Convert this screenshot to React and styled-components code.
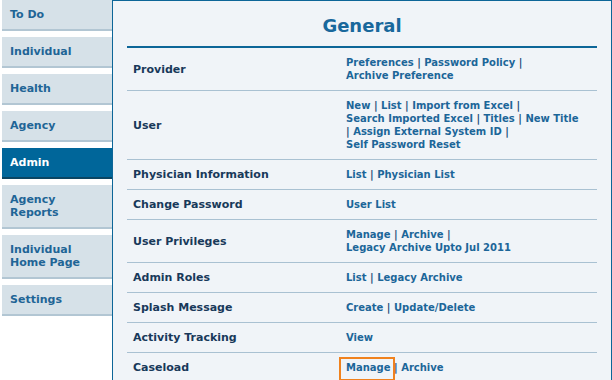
import React from 'react';
import styled, { createGlobalStyle } from 'styled-components';

const GlobalStyle = createGlobalStyle`
  html, body {
    margin: 0;
    padding: 0;
    background: #ffffff;
  }
  body {
    font-family: "DejaVu Sans", Verdana, sans-serif;
  }
`;

const Page = styled.div`
  display: flex;
  align-items: flex-start;
  width: 612px;
  height: 380px;
  overflow: hidden;
  padding-left: 2px;
  box-sizing: border-box;
`;

const Sidebar = styled.nav`
  display: flex;
  flex-direction: column;
  gap: 6px;
  width: 110px;
  flex-shrink: 0;
`;

const Tab = styled.div`
  padding: 8px 8px;
  font-size: 11px;
  line-height: 13px;
  font-weight: bold;
  color: ${p => (p.active ? '#ffffff' : '#1f6596')};
  background: ${p => (p.active ? '#00669a' : '#d6e1e8')};
  border-bottom: 2px solid ${p => (p.active ? '#0a4563' : '#b2c6d3')};
`;

const Panel = styled.section`
  width: 500px;
  height: 400px;
  box-sizing: border-box;
  background: #f0f4f8;
  border: 1px solid #0d6698;
  padding: 0 14px;
`;

const Header = styled.h1`
  margin: 0;
  padding: 14px 0 9px;
  font-size: 18px;
  line-height: 22px;
  font-weight: bold;
  text-align: center;
  color: #19689c;
  border-bottom: 2px solid #0d6698;
`;

const Row = styled.div`
  display: grid;
  grid-template-columns: 213px 1fr;
  align-items: center;
  border-bottom: 1px solid #a9c1d2;
`;

const Label = styled.div`
  padding: 8px 6px;
  font-size: 11px;
  line-height: 13px;
  font-weight: bold;
  color: #18395a;
`;

const Links = styled.div`
  padding: 8px 6px;
  font-size: 10px;
  line-height: 13px;
  font-weight: bold;
  color: #1c6699;
`;

const Line = styled.div`
  white-space: nowrap;
`;

const Link = styled.a`
  position: relative;
  color: #1c6699;
  text-decoration: none;
  cursor: pointer;

  ${p =>
    p.highlight &&
    `
    &::after {
      content: '';
      position: absolute;
      left: -7px;
      right: -4px;
      top: -5px;
      bottom: -8px;
      border: 2px solid #f0821e;
    }
  `}
`;

const Sep = styled.span`
  color: #1c4f78;
`;

const tabs = [
  { label: 'To Do' },
  { label: 'Individual' },
  { label: 'Health' },
  { label: 'Agency' },
  { label: 'Admin', active: true },
  { label: ['Agency', 'Reports'] },
  { label: ['Individual', 'Home Page'] },
  { label: 'Settings' },
];

// each line is a list of items; '|' is a separator
const rows = [
  {
    label: 'Provider',
    lines: [
      ['Preferences', '|', 'Password Policy', '|'],
      ['Archive Preference'],
    ],
  },
  {
    label: 'User',
    lines: [
      ['New', '|', 'List', '|', 'Import from Excel', '|'],
      ['Search Imported Excel', '|', 'Titles', '|', 'New Title'],
      ['|', 'Assign External System ID', '|'],
      ['Self Password Reset'],
    ],
  },
  { label: 'Physician Information', lines: [['List', '|', 'Physician List']] },
  { label: 'Change Password', lines: [['User List']] },
  {
    label: 'User Privileges',
    lines: [['Manage', '|', 'Archive', '|'], ['Legacy Archive Upto Jul 2011']],
  },
  { label: 'Admin Roles', lines: [['List', '|', 'Legacy Archive']] },
  { label: 'Splash Message', lines: [['Create', '|', 'Update/Delete']] },
  { label: 'Activity Tracking', lines: [['View']] },
  { label: 'Caseload', lines: [['Manage*', '|', 'Archive']] },
];

const renderLine = (items, key) => (
  <Line key={key}>
    {items.map((item, i) => {
      const space = i < items.length - 1 ? ' ' : '';
      if (item === '|') {
        return (
          <React.Fragment key={i}>
            <Sep>|</Sep>
            {space}
          </React.Fragment>
        );
      }
      const highlight = item.endsWith('*');
      return (
        <React.Fragment key={i}>
          <Link highlight={highlight ? 1 : 0}>{highlight ? item.slice(0, -1) : item}</Link>
          {space}
        </React.Fragment>
      );
    })}
  </Line>
);

export default function App() {
  return (
    <>
      <GlobalStyle />
      <Page>
        <Sidebar>
          {tabs.map((t, i) => (
            <Tab key={i} active={t.active ? 1 : 0}>
              {Array.isArray(t.label) ? (
                <>
                  {t.label[0]}
                  <br />
                  {t.label[1]}
                </>
              ) : (
                t.label
              )}
            </Tab>
          ))}
        </Sidebar>
        <Panel>
          <Header>General</Header>
          {rows.map(r => (
            <Row key={r.label}>
              <Label>{r.label}</Label>
              <Links>{r.lines.map((l, i) => renderLine(l, i))}</Links>
            </Row>
          ))}
        </Panel>
      </Page>
    </>
  );
}
